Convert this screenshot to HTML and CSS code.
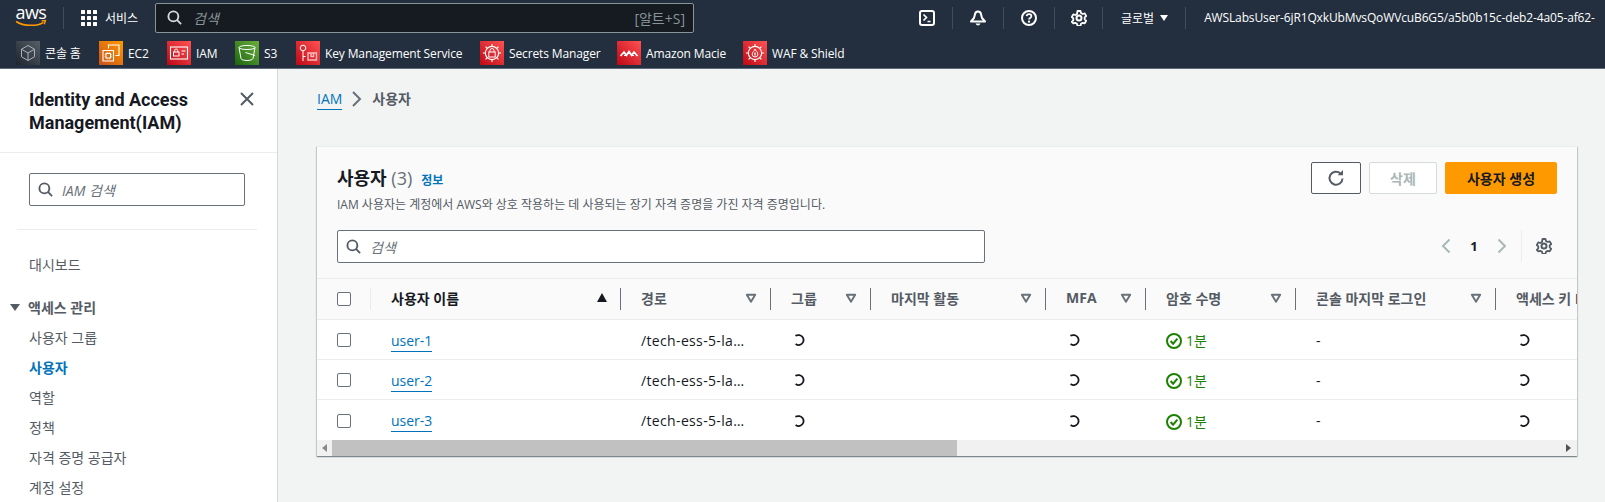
FILE: index.html
```html
<!DOCTYPE html>
<html lang="ko">
<head>
<meta charset="utf-8">
<title>IAM 사용자</title>
<link rel="stylesheet" href="styles.css">
</head>
<body>
<svg class="defs" width="0" height="0" aria-hidden="true">
  <symbol id="i-search" viewBox="0 0 16 16"><circle cx="6.800" cy="6.800" r="5.300" fill="none" stroke="currentColor" stroke-width="2"/><path d="M10.600 10.600l4.400 4.400" fill="none" stroke="currentColor" stroke-width="2"/></symbol>
  <symbol id="i-spin" viewBox="0 0 12 12"><path d="M2.400 1.800C4.800.4 8.200 1 9.700 3.300c1.600 2.400.9 5.600-1.500 7-1.800 1.100-3.900 1-5.600-.2" fill="none" stroke="currentColor" stroke-width="1.800"/></symbol>
  <symbol id="i-down" viewBox="0 0 12 12"><path d="M1.800 2.800h8.400L6 9.800z" fill="none" stroke="currentColor" stroke-width="1.900" stroke-linejoin="round"/></symbol>
  <symbol id="i-ok" viewBox="0 0 16 16"><circle cx="8" cy="8" r="7" fill="none" stroke="currentColor" stroke-width="2"/><path d="M4.600 8l2.500 2.700 4.300-5" fill="none" stroke="currentColor" stroke-width="2"/></symbol>
  <symbol id="i-gear" viewBox="0 0 16 16"><circle cx="8" cy="8" r="2.500" fill="none" stroke="currentColor" stroke-width="2"/><path d="M6.500 1h3l.5 2 1.700 1 2-.6 1.500 2.600-1.500 1.400v2l1.500 1.400-1.500 2.600-2-.6-1.700 1-.5 2h-3l-.5-2-1.700-1-2 .6L.8 11.800l1.500-1.400v-2L.8 7l1.500-2.600 2 .6 1.700-1z" fill="none" stroke="currentColor" stroke-width="1.800" stroke-linejoin="round"/></symbol>
  <symbol id="i-ring" viewBox="0 0 18 18"><circle cx="9" cy="9" r="6" fill="none" stroke="#fff" stroke-width="1"/><path d="M9 .8v2.700M9 14.500v2.700M.8 9h2.700M14.500 9h2.700M3.200 3.200l1.900 1.900M12.900 12.900l1.900 1.900M14.800 3.200l-1.900 1.900M5.100 12.900l-1.900 1.900" stroke="#fff" stroke-width="1"/></symbol>
</svg>

<header class="topbar">
  <div class="nav-main">
    <div class="logo">
      <svg class="logo-svg" viewBox="0 0 32 22" width="32" height="22"><text x="0.500" y="13" class="logo-text">aws</text><path d="M1 15.500c8 5 21 5 27.500 .8" fill="none" stroke="#f90" stroke-width="1.500"/><path d="M26.500 14.800l4-.3-1.200 3.700" fill="none" stroke="#f90" stroke-width="1.300"/></svg>
    </div>
    <span class="vsep logo-sep"></span>
    <div class="services">
      <span class="dots"><i></i><i></i><i></i><i></i><i></i><i></i><i></i><i></i><i></i></span>
      <span>서비스</span>
    </div>
    <div class="global-search">
      <svg class="gs-icon" width="15" height="15"><use href="#i-search"/></svg>
      <span class="gs-ph">검색</span>
      <span class="gs-key">[알트+S]</span>
    </div>
    <div class="tools">
      <span class="tool tool-term"><svg width="16" height="16" viewBox="0 0 16 16"><rect x="1" y="1" width="14" height="14" rx="2" fill="none" stroke="#fff" stroke-width="2"/><path d="M4.500 4.500l3 3-3 3M8.500 11.500h3" fill="none" stroke="#fff" stroke-width="1.700"/></svg></span>
      <span class="vsep"></span>
      <span class="tool"><svg width="16" height="16" viewBox="0 0 16 16"><path d="M8 1.500c-2 0-3 1.500-3.200 3.500L4 8l-3 3.500h14L12 8l-.8-3C11 3 10 1.500 8 1.500z" fill="none" stroke="#fff" stroke-width="2" stroke-linejoin="round"/><path d="M5.500 13.500c.5 1.300 1.500 2 2.500 2s2-.7 2.500-2z" fill="#fff"/></svg></span>
      <span class="vsep"></span>
      <span class="tool"><svg width="16" height="16" viewBox="0 0 16 16"><circle cx="8" cy="8" r="7" fill="none" stroke="#fff" stroke-width="2"/><path d="M5.600 6.200C5.800 4.800 6.800 4.200 8 4.200c1.400 0 2.400.8 2.400 2 0 1.800-2.400 1.800-2.400 3.400" fill="none" stroke="#fff" stroke-width="1.700"/><rect x="7" y="10.600" width="2" height="2" fill="#fff"/></svg></span>
      <span class="vsep"></span>
      <span class="tool tool-gear"><svg width="16" height="16" class="white"><use href="#i-gear"/></svg></span>
      <span class="vsep"></span>
      <span class="region">글로벌<span class="tri"></span></span>
      <span class="vsep"></span>
      <span class="account">AWSLabsUser-6jR1QxkUbMvsQoWVcuB6G5/a5b0b15c-deb2-4a05-af62-</span>
    </div>
  </div>
  <nav class="favs">
    <a class="fav fav-home"><span class="ico ico-dark"><svg width="18" height="18" viewBox="0 0 18 18"><path d="M9 1.500l6.500 3.700v7.600L9 16.500l-6.500-3.700V5.200zM2.500 5.200L9 9l6.500-3.800M9 9v7.500" fill="none" stroke="#aab2ba" stroke-width="1"/></svg></span>콘솔 홈</a>
    <a class="fav fav-ec2"><span class="ico ico-orange"><svg width="20" height="20" viewBox="0 0 20 20"><path d="M7.500 5.500V2h10.500v10.500h-3.500M2 7.500h10.500V18H2z" fill="none" stroke="#fff" stroke-width="1.100"/><rect x="5" y="10.500" width="4.500" height="4.500" fill="none" stroke="#fff" stroke-width="1"/><path d="M6.200 9v1.500M8.300 9v1.500M6.200 15v1.500M8.300 15v1.500M3.500 11.700H5M3.500 13.800H5M9.500 11.700H11M9.500 13.800H11" stroke="#fff" stroke-width=".7"/></svg></span>EC2</a>
    <a class="fav fav-iam"><span class="ico ico-red"><svg width="20" height="20" viewBox="0 0 20 20"><rect x="1.500" y="4" width="17" height="12" fill="none" stroke="#fff" stroke-width="1.100"/><rect x="4.500" y="9" width="5.500" height="4" fill="none" stroke="#fff" stroke-width="1"/><path d="M5.700 9V7.500a1.500 1.500 0 0 1 3 0V9" fill="none" stroke="#fff" stroke-width="1"/><path d="M12.500 8h4M12.500 11h2.500" stroke="#fff" stroke-width="1"/></svg></span>IAM</a>
    <a class="fav fav-s3"><span class="ico ico-green"><svg width="20" height="20" viewBox="0 0 20 20"><ellipse cx="10" cy="4.500" rx="8" ry="2" fill="none" stroke="#fff" stroke-width="1"/><path d="M2 4.500l2 11c.2 1.200 3 2 6 2s5.800-.8 6-2l2-11M8.500 9.500l9.500 3" fill="none" stroke="#fff" stroke-width="1"/></svg></span>S3</a>
    <a class="fav fav-kms"><span class="ico ico-red"><svg width="20" height="20" viewBox="0 0 20 20"><circle cx="5" cy="5" r="2.800" fill="none" stroke="#fff" stroke-width="1"/><path d="M5 7.800V18M5 13.500h2.500" stroke="#fff" stroke-width="1"/><path d="M10 10h8.500v7H10zM13 10v3.500h2.500V10" fill="none" stroke="#ffb9b9" stroke-width="1.400"/></svg></span>Key Management Service</a>
    <a class="fav fav-sec"><span class="ico ico-red"><svg class="ring" width="20" height="20"><use href="#i-ring"/></svg><svg class="ring-in" width="20" height="20" viewBox="0 0 20 20"><rect x="6.800" y="9" width="6.400" height="5" fill="none" stroke="#fff" stroke-width="1"/><path d="M8 9V7.500a2 2 0 0 1 4 0V9" fill="none" stroke="#fff" stroke-width="1"/></svg></span>Secrets Manager</a>
    <a class="fav fav-mac"><span class="ico ico-red"><svg width="20" height="20" viewBox="0 0 20 20"><path d="M1.500 13l3.500-4 2.500 3.200L10 8.500l2.500 3.700L15 9l3.500 4" fill="none" stroke="#fff" stroke-width="1.700"/><path d="M5 12.500h2M13 12.500h2" stroke="#fff" stroke-width="1.200"/></svg></span>Amazon Macie</a>
    <a class="fav fav-waf"><span class="ico ico-red"><svg class="ring" width="20" height="20"><use href="#i-ring"/></svg><svg class="ring-in" width="20" height="20" viewBox="0 0 20 20"><path d="M10 6c.4 1.800 2.800 2.800 2.800 5.200a2.800 2.800 0 0 1-5.600 0C7.200 9 9.600 8 10 6z" fill="none" stroke="#fff" stroke-width="1"/><path d="M10 9.500v3" stroke="#fff" stroke-width="1.200"/></svg></span>WAF &amp; Shield</a>
  </nav>
</header>

<div class="app">
  <aside class="sidebar">
    <div class="side-head">
      <h2 class="side-title">Identity and Access Management(IAM)</h2>
      <svg class="side-close" width="16" height="16" viewBox="0 0 16 16"><path d="M2 2l12 12M14 2L2 14" stroke="#545b64" stroke-width="2" fill="none"/></svg>
    </div>
    <div class="side-search-wrap">
      <div class="input side-search">
        <svg class="in-icon" width="15" height="15"><use href="#i-search"/></svg>
        <span class="ph">IAM 검색</span>
      </div>
    </div>
    <div class="side-rule"></div>
    <ul class="side-nav">
      <li class="side-item side-dash">대시보드</li>
      <li class="side-group"><span class="tri-down"></span>액세스 관리</li>
      <li class="side-item">사용자 그룹</li>
      <li class="side-item is-active">사용자</li>
      <li class="side-item">역할</li>
      <li class="side-item">정책</li>
      <li class="side-item">자격 증명 공급자</li>
      <li class="side-item">계정 설정</li>
    </ul>
  </aside>

  <main class="main">
    <div class="crumbs">
      <a class="crumb-link">IAM</a>
      <svg class="crumb-sep" width="14" height="18" viewBox="0 0 14 18"><path d="M3 2l7 7-7 7" fill="none" stroke="#687078" stroke-width="2"/></svg>
      <span class="crumb-cur">사용자</span>
    </div>

    <section class="card">
      <div class="card-top">
        <div class="card-heading">
          <div class="title-line">
            <h1 class="card-title">사용자 <span class="count">(3)</span></h1>
            <a class="info">정보</a>
          </div>
          <p class="card-desc">IAM 사용자는 계정에서 AWS와 상호 작용하는 데 사용되는 장기 자격 증명을 가진 자격 증명입니다.</p>
        </div>
        <div class="actions">
          <button class="btn btn-icon"><svg width="18" height="18" viewBox="0 0 18 18"><path d="M15.500 9.500A6.500 6.500 0 1 1 13.300 4.300" fill="none" stroke="#545b64" stroke-width="2"/><path d="M16 1v5.300h-5.300z" fill="#545b64"/></svg></button>
          <button class="btn btn-off">삭제</button>
          <button class="btn btn-primary">사용자 생성</button>
        </div>
      </div>
      <div class="card-tools">
        <div class="input table-search">
          <svg class="in-icon" width="15" height="15"><use href="#i-search"/></svg>
          <span class="ph">검색</span>
        </div>
        <div class="pager">
          <svg class="pg-arrow" width="14" height="16" viewBox="0 0 14 16"><path d="M10.500 1.500L4 8l6.500 6.500" fill="none" stroke="#aab7b8" stroke-width="2"/></svg>
          <span class="pg-num">1</span>
          <svg class="pg-arrow" width="14" height="16" viewBox="0 0 14 16"><path d="M3.500 1.500L10 8l-6.500 6.500" fill="none" stroke="#aab7b8" stroke-width="2"/></svg>
          <span class="pg-sep"></span>
          <svg class="pg-gear" width="16" height="16"><use href="#i-gear"/></svg>
        </div>
      </div>

      <div class="table-clip">
        <table class="users">
          <colgroup>
            <col class="c-sel"><col class="c-name"><col class="c-path"><col class="c-group"><col class="c-last"><col class="c-mfa"><col class="c-pw"><col class="c-con"><col class="c-key">
          </colgroup>
          <thead>
            <tr>
              <th><div class="th th-sel"><span class="check"></span></div></th>
              <th><div class="th th-sorted"><span>사용자 이름</span><span class="tri-up"></span></div></th>
              <th><div class="th"><span>경로</span><svg class="sort" width="12" height="12"><use href="#i-down"/></svg></div></th>
              <th><div class="th"><span>그룹</span><svg class="sort" width="12" height="12"><use href="#i-down"/></svg></div></th>
              <th><div class="th"><span>마지막 활동</span><svg class="sort" width="12" height="12"><use href="#i-down"/></svg></div></th>
              <th><div class="th"><span>MFA</span><svg class="sort" width="12" height="12"><use href="#i-down"/></svg></div></th>
              <th><div class="th"><span>암호 수명</span><svg class="sort" width="12" height="12"><use href="#i-down"/></svg></div></th>
              <th><div class="th"><span>콘솔 마지막 로그인</span><svg class="sort" width="12" height="12"><use href="#i-down"/></svg></div></th>
              <th><div class="th th-last"><span>액세스 키 ID</span></div></th>
            </tr>
          </thead>
          <tbody>
            <tr>
              <td class="td-sel"><span class="check"></span></td>
              <td><a class="ulink">user-1</a></td>
              <td><div class="path">/tech-ess-5-lab-user/</div></td>
              <td class="td-spin"><svg class="spin" width="12" height="12"><use href="#i-spin"/></svg></td>
              <td></td>
              <td class="td-spin"><svg class="spin" width="12" height="12"><use href="#i-spin"/></svg></td>
              <td class="ok"><svg width="16" height="16"><use href="#i-ok"/></svg><span>1분</span></td>
              <td>-</td>
              <td class="td-spin"><svg class="spin" width="12" height="12"><use href="#i-spin"/></svg></td>
            </tr>
            <tr>
              <td class="td-sel"><span class="check"></span></td>
              <td><a class="ulink">user-2</a></td>
              <td><div class="path">/tech-ess-5-lab-user/</div></td>
              <td class="td-spin"><svg class="spin" width="12" height="12"><use href="#i-spin"/></svg></td>
              <td></td>
              <td class="td-spin"><svg class="spin" width="12" height="12"><use href="#i-spin"/></svg></td>
              <td class="ok"><svg width="16" height="16"><use href="#i-ok"/></svg><span>1분</span></td>
              <td>-</td>
              <td class="td-spin"><svg class="spin" width="12" height="12"><use href="#i-spin"/></svg></td>
            </tr>
            <tr>
              <td class="td-sel"><span class="check"></span></td>
              <td><a class="ulink">user-3</a></td>
              <td><div class="path">/tech-ess-5-lab-user/</div></td>
              <td class="td-spin"><svg class="spin" width="12" height="12"><use href="#i-spin"/></svg></td>
              <td></td>
              <td class="td-spin"><svg class="spin" width="12" height="12"><use href="#i-spin"/></svg></td>
              <td class="ok"><svg width="16" height="16"><use href="#i-ok"/></svg><span>1분</span></td>
              <td>-</td>
              <td class="td-spin"><svg class="spin" width="12" height="12"><use href="#i-spin"/></svg></td>
            </tr>
          </tbody>
        </table>
      </div>
      <div class="hscroll">
        <span class="sb-arrow sb-left"></span>
        <span class="sb-thumb"></span>
        <span class="sb-arrow sb-right"></span>
      </div>
    </section>
  </main>
</div>
</body>
</html>
```

FILE: styles.css
```css
* { box-sizing: border-box; }
html, body { margin: 0; height: 100%; overflow: hidden; }
body {
  font-family: "Open Sans", "Noto Sans CJK KR", sans-serif;
  font-size: 14px;
  color: #16191f;
  background: #f2f3f3;
  display: flex;
  flex-direction: column;
}
.defs { display: block; height: 0; }
h1, h2, p, ul { margin: 0; padding: 0; }
ul { list-style: none; }

/* top navigation */
.topbar { background: #232f3e; color: #fff; height: 69px; border-bottom: 1px solid #5f6b7a; flex: none; }
.nav-main { height: 35px; display: flex; align-items: center; padding-left: 15px; white-space: nowrap; overflow: hidden; }
.nav-main > * { flex: none; }
.logo { width: 32px; height: 22px; margin-top: -1px; }
.logo-svg { display: block; overflow: visible; }
.logo-text { font-family: "Open Sans", sans-serif; font-size: 18px; font-weight: 500; fill: #fff; letter-spacing: -.6px; }
.vsep { width: 1px; height: 22px; background: #414d5c; flex: none; }
.logo-sep { margin-left: 16px; }
.services { display: flex; align-items: center; gap: 8px; margin-left: 17px; font-size: 12px; width: 75px; }
.dots { display: grid; grid-template-columns: repeat(3, 4px); gap: 2px; }
.dots i { width: 4px; height: 4px; background: #fff; display: block; border-radius: .5px; }
.global-search { width: 539px; height: 30px; margin-left: -1px; background: #161a21; border: 1px solid #879596; border-radius: 2px; display: flex; align-items: center; padding: 0 8px 0 11px; color: #d5dbdb; }
.gs-ph { font-style: italic; font-size: 14px; color: #879596; margin-left: 11px; flex: 1; }
.gs-key { font-size: 14px; color: #879596; }
.gs-icon { color: #d5dbdb; }
.tools { display: flex; align-items: center; margin-left: 225px; }
.tool { width: 50px; display: flex; justify-content: center; }
.tool svg { display: block; }
.white { color: #fff; }
.tool-term { width: 16px; margin-right: 17px; }
.tool-gear { width: 47px; }
.region { display: flex; align-items: center; font-size: 12px; padding: 0 17px 0 18px; }
.tri { width: 0; height: 0; border: 4.500px solid transparent; border-top: 6px solid #fff; border-bottom: 0; margin-left: 6px; }
.account { font-size: 12px; margin-left: 18px; letter-spacing: -.13px; }

.favs { height: 33px; display: flex; align-items: flex-start; padding: 6px 0 0 16px; }
.fav { display: flex; align-items: center; height: 24px; font-size: 12px; color: #fff; white-space: nowrap; letter-spacing: -.13px; }
.ico { width: 24px; height: 24px; margin-right: 5px; display: grid; place-items: center; flex: none; }
.ico > svg { grid-area: 1 / 1; }
.ico-dark { background: linear-gradient(45deg, #1e252e, #565e68); }
.ico-orange { background: linear-gradient(45deg, #c8511b, #ff9900); }
.ico-red { background: linear-gradient(45deg, #bd0816, #ff5252); }
.ico-green { background: linear-gradient(45deg, #1b660f, #6cae3e); }
.fav-home { width: 83px; }
.fav-ec2 { width: 68px; }
.fav-iam { width: 68px; }
.fav-s3 { width: 61px; }
.fav-kms { width: 184px; }
.fav-sec { width: 137px; }
.fav-mac { width: 126px; }

/* layout */
.app { flex: 1; display: flex; min-height: 0; }
.sidebar { width: 278px; flex: none; background: #fff; border-right: 1px solid #d5dbdb; overflow: hidden; }
.side-head { height: 84px; padding: 19px 22px 0 29px; border-bottom: 1px solid #eaeded; display: flex; justify-content: space-between; align-items: flex-start; }
.side-title { font-family: Roboto, "Noto Sans CJK KR", sans-serif; font-size: 18px; font-weight: 700; line-height: 23px; width: 190px; }
.side-close { margin-top: 3px; }
.side-search-wrap { padding: 20px 32px 0 29px; }
.input { height: 33px; background: #fff; border: 1px solid #687078; border-radius: 2px; display: flex; align-items: center; padding-left: 8px; color: #545b64; }
.in-icon { flex: none; }
.ph { font-style: italic; color: #687078; margin-left: 9px; font-size: 14px; }
.side-rule { height: 1px; background: #eaeded; margin: 23px 20px 0 17px; }
.side-nav { padding-top: 20px; }
.side-item { height: 30px; line-height: 30px; padding-left: 29px; color: #545b64; }
.side-dash { margin-bottom: 11px; }
.side-group { height: 32px; line-height: 31px; font-weight: 700; color: #545b64; padding-left: 10px; display: flex; align-items: center; }
.tri-down { width: 0; height: 0; border: 5.500px solid transparent; border-top: 7px solid #545b64; border-bottom: 0; margin-right: 8px; }
.is-active { color: #0073bb; font-weight: 700; }

/* main */
.main { flex: 1; min-width: 0; padding: 0 28px 0 39px; }
.crumbs { height: 77px; padding-top: 20px; display: flex; align-items: flex-start; }
.crumb-link { color: #0073bb; font-size: 14px; line-height: 20px; border-bottom: 1px solid #0073bb; height: 21px; }
.crumb-sep { margin: 1px 8px 0 8px; }
.crumb-cur { color: #545b64; line-height: 20px; font-weight: 700; }

.card { background: #fafafa; box-shadow: 0 1px 1px 0 rgba(0,28,36,.3), 1px 1px 1px 0 rgba(0,28,36,.15), -1px 1px 1px 0 rgba(0,28,36,.15); border-top: 1px solid #eaeded; height: 310px; overflow: hidden; }
.card-top { display: flex; justify-content: space-between; padding: 15px 20px 0 20px; height: 83px; }
.title-line { display: flex; align-items: baseline; gap: 9px; height: 32px; padding-top: 4px; }
.card-title { font-size: 18px; font-weight: 700; line-height: 24px; }
.count { font-weight: 400; color: #687078; }
.info { font-size: 12px; font-weight: 700; color: #0073bb; }
.card-desc { font-size: 12px; line-height: 16px; color: #545b64; margin-top: 3px; }
.actions { display: flex; gap: 8px; }
.btn { height: 32px; border-radius: 2px; font: 700 14px "Open Sans", "Noto Sans CJK KR", sans-serif; padding: 0; background: #fff; display: flex; align-items: center; justify-content: center; }
.btn-icon { width: 50px; border: 1px solid #545b64; }
.btn-off { width: 68px; border: 1px solid #d5dbdb; color: #aab7b8; }
.btn-primary { width: 112px; border: 1px solid #ff9900; background: #ff9900; color: #16191f; }
.card-tools { display: flex; justify-content: space-between; padding: 0 25px 0 20px; height: 49px; border-bottom: 1px solid #eaeded; }
.table-search { width: 648px; }
.pager { display: flex; align-items: flex-start; height: 33px; }
.pg-arrow { margin-top: 8px; }
.pg-num { font-weight: 700; font-size: 13px; width: 42px; text-align: center; line-height: 32px; }
.pg-sep { width: 1px; height: 32px; background: #eaeded; margin: 0 14px 0 12px; }
.pg-gear { margin-top: 8px; color: #545b64; }

.table-clip { overflow: hidden; }
.users { border-collapse: collapse; table-layout: fixed; width: 1380px; margin-left: -1px; }
.c-sel { width: 55px; }
.c-name { width: 250px; }
.c-path { width: 150px; }
.c-group { width: 100px; }
.c-last { width: 175px; }
.c-mfa { width: 100px; }
.c-pw { width: 150px; }
.c-con { width: 200px; }
.c-key { width: 200px; }
th { padding: 0; height: 40px; background: #fafafa; border-bottom: 1px solid #eaeded; text-align: left; font-weight: 700; color: #545b64; }
.th { height: 22px; padding: 0 13px 2px 20px; border-right: 1px solid #687078; display: flex; align-items: center; justify-content: space-between; white-space: nowrap; overflow: hidden; }
.th-sel { padding: 0 0 0 21px; border-right-color: #eaeded; }
.th-sorted { color: #16191f; }
.th-last { border-right: 0; }
.sort { color: #687078; flex: none; }
.tri-up { width: 0; height: 0; border: 5.500px solid transparent; border-bottom: 9px solid #16191f; border-top: 0; }
.check { display: block; width: 14px; height: 14px; border: 1px solid #687078; border-radius: 2px; background: #fff; }
td { padding: 2px 20px 0; height: 40px; background: #fff; border-bottom: 1px solid #eaeded; font-size: 14px; }
tbody tr:last-child td { border-bottom: 0; height: 41px; }
.td-sel { padding-left: 21px; }
.ulink { color: #0073bb; border-bottom: 1px solid #0073bb; padding-bottom: 1px; }
.path { width: 108px; white-space: nowrap; overflow: hidden; text-overflow: ellipsis; letter-spacing: .35px; }
.spin { display: block; color: #16191f; margin-left: 2px; }
.ok { color: #1d8102; }
.ok svg { vertical-align: -3px; margin-right: 4px; }

.hscroll { height: 16px; background: #f1f1f1; display: flex; align-items: center; padding: 0 4px; }
.sb-thumb { width: 625px; height: 16px; background: #c1c1c1; margin-left: 5px; }
.sb-arrow { width: 0; height: 0; border: 4px solid transparent; }
.sb-left { border-right: 5px solid #8a8a8a; border-left: 0; margin-left: 1px; }
.sb-right { border-left: 5px solid #505050; border-right: 0; margin-left: auto; margin-right: 2px; }
```
